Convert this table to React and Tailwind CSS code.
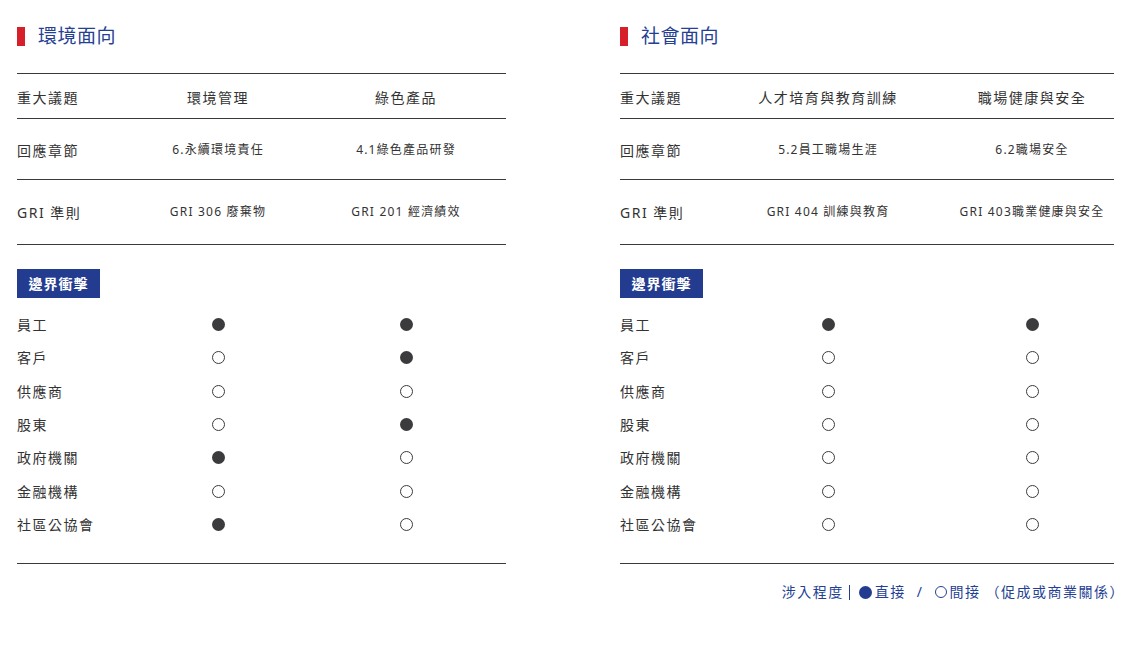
import React from 'react';

const FONT = { fontFamily: "'Noto Sans', 'Noto Sans CJK TC', sans-serif" };

const stakeholders = ['員工', '客戶', '供應商', '股東', '政府機關', '金融機構', '社區公協會'];

const panels = [
  {
    id: 'env',
    title: '環境面向',
    width: 'w-[489px]',
    cols: 'grid-cols-[107px_188px_188px]',
    topics: ['環境管理', '綠色產品'],
    chapters: ['6.永續環境責任', '4.1綠色產品研發'],
    gri: ['GRI 306 廢棄物', 'GRI 201 經濟績效'],
    impact: [[1, 1], [0, 1], [0, 0], [0, 1], [1, 0], [0, 0], [1, 0]],
  },
  {
    id: 'soc',
    title: '社會面向',
    width: 'w-[494px]',
    cols: 'grid-cols-[106px_204px_204px]',
    topics: ['人才培育與教育訓練', '職場健康與安全'],
    chapters: ['5.2員工職場生涯', '6.2職場安全'],
    gri: ['GRI 404 訓練與教育', 'GRI 403職業健康與安全'],
    impact: [[1, 1], [0, 0], [0, 0], [0, 0], [0, 0], [0, 0], [0, 0]],
    legend: true,
  },
];

const Dot = ({ on }) =>
  on ? (
    <span className="block w-[13px] h-[13px] rounded-full bg-[#3b3b3d]" />
  ) : (
    <span className="block w-[13px] h-[13px] rounded-full border border-[#3b3b3d] bg-white" />
  );

const InfoRow = ({ cols, label, cells, height, small, pad }) => (
  <div className={`grid ${cols} items-center border-b border-[#3a3a3a] ${height} ${pad}`}>
    <span className="text-[14px] tracking-[1.5px] text-[#333]">{label}</span>
    {cells.map((c) => (
      <span
        key={c}
        className={`text-center whitespace-nowrap text-[#333] ${small ? 'text-[12px] tracking-[1.2px]' : 'text-[14px] tracking-[1.5px]'}`}
      >
        {c}
      </span>
    ))}
  </div>
);

const Panel = ({ p }) => (
  <div className={`${p.width} shrink-0`}>
    {/* Title */}
    <div className="flex items-center gap-[13px] h-[28px] mt-[22px]">
      <span className="w-[8px] h-[19px] bg-[#d71f29]" />
      <h2 className="text-[19px] tracking-[0.5px] text-[#253f94] leading-none">{p.title}</h2>
    </div>

    {/* Topics table */}
    <div className="mt-[23px] border-t border-[#3a3a3a]">
      <InfoRow cols={p.cols} label="重大議題" cells={p.topics} height="h-[45px]" pad="pt-[3px]" />
      <InfoRow cols={p.cols} label="回應章節" cells={p.chapters} height="h-[61px]" small pad="pt-[2px]" />
      <InfoRow cols={p.cols} label="GRI 準則" cells={p.gri} height="h-[65px]" small pad="" />
    </div>

    {/* Boundary impact */}
    <div className="mt-[24px] w-[83px] h-[29px] bg-[#233c8f] flex items-center justify-center">
      <span className="text-white text-[14px] font-bold tracking-[1px]">邊界衝擊</span>
    </div>

    <div className="mt-[10px] border-b border-[#3a3a3a] pb-[22px]">
      {stakeholders.map((s, i) => (
        <div key={s} className={`grid ${p.cols} items-center h-[33.33px]`}>
          <span className="text-[14px] tracking-[1.5px] text-[#333]">{s}</span>
          <div className="flex justify-center"><Dot on={p.impact[i][0]} /></div>
          <div className="flex justify-center"><Dot on={p.impact[i][1]} /></div>
        </div>
      ))}
    </div>

    {p.legend && (
      <div className="mt-[18px] flex items-center justify-end text-[14px] tracking-[1.5px] text-[#253f94] leading-[20px] -mr-[11px]">
        <span>涉入程度</span>
        <span className="ml-[5px] mr-[9px] w-[1px] h-[15px] bg-[#253f94]" />
        <span className="w-[13px] h-[13px] rounded-full bg-[#233c8f] mr-[3px]" />
        <span>直接</span>
        <span className="mx-[11px]">/</span>
        <span className="w-[12px] h-[12px] rounded-full border border-[#253f94] mr-[3px]" />
        <span>間接</span>
        <span className="ml-[5px]">（促成或商業關係）</span>
      </div>
    )}
  </div>
);

export default function App() {
  return (
    <div className="w-[1142px] h-[650px] bg-white overflow-hidden" style={FONT}>
      <div className="flex gap-[114px] pl-[17px]">
        {panels.map((p) => (
          <Panel key={p.id} p={p} />
        ))}
      </div>
    </div>
  );
}
